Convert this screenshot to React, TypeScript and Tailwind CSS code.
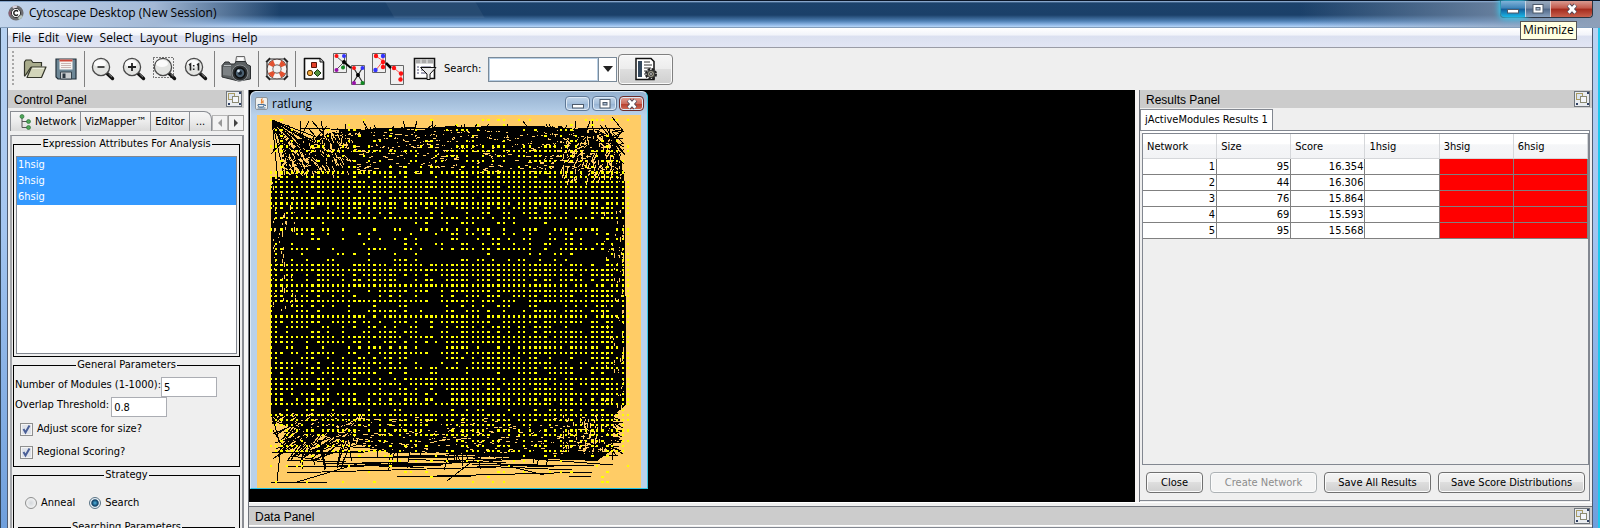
import React, { useState } from "react";

/* ---------- network drawing ---------- */

const NET_W = 384;
const NET_H = 373;
const PITCH = 5.17;
const ROW_DENSITY = [
  0.22, 0.12, 0.12, 0.12, 0.2, 0.4, 0.85, 0.3, 0.55, 0.3, 0.85, 0.7, 0.97, 0.97, 0.85, 0.97, 0.97, 0.85, 0.5, 0.92,
  0.14, 0.5, 0.45, 0.4, 0.4, 0.5, 0.25, 0.4, 0.93, 0.98, 0.85, 0.7, 0.96, 0.9, 0.6, 0.95, 0.4, 0.55, 0.93, 0.8,
  0.5, 0.7, 0.95, 0.85, 0.5, 0.8, 0.5, 0.7, 0.9, 0.6, 0.8, 0.93, 0.6, 0.9, 0.75, 0.93, 0.45, 0.97, 0.85, 0.55,
  0.6, 0.6, 0.45, 0.5, 0.55, 0.25, 0.12, 0.2, 0.25, 0.08, 0.1,
];

function makeRandom(seed: number) {
  let s = seed;
  return () => {
    s = (s * 1664525 + 1013904223) % 4294967296;
    return s / 4294967296;
  };
}

function buildNetwork() {
  const r = makeRandom(77);
  const cx = (v: number) => Math.max(14, Math.min(368, Math.round(v)));
  const n = (v: number) => Math.round(v);
  const line = (x1: number, y1: number, x2: number, y2: number) => `M${cx(x1)} ${n(y1)}L${cx(x2)} ${n(y2)}`;
  let black = "";
  let gaps = "";
  let dots = "";

  // edges fanning out along the top
  for (let i = 0; i < 110; i++) {
    const x = 16 + r() * 345;
    black += line(x, 9 + r() * 12, x + (r() - 0.5) * 50, 28 + r() * 12);
  }
  for (let i = 0; i < 22; i++) {
    const x = 20 + r() * 240;
    black += line(x, 11 + r() * 9, x + 50 + r() * 80, 11 + r() * 9);
  }
  for (let i = 0; i < 18; i++) black += line(15, 5, 22 + r() * 70, 26 + r() * 50);
  for (let i = 0; i < 9; i++) black += line(15, 62 + r() * 4, 24 + r() * 20, 60 + r() * 20);
  for (let i = 0; i < 12; i++) {
    const x = 30 + r() * 320;
    black += line(x, 6, x + (r() - 0.5) * 24, 20);
  }

  // edges along both sides
  for (let i = 0; i < 80; i++) {
    const y = 75 + r() * 240;
    black += line(14 + r() * 3, y, 22 + r() * 3, y + (r() - 0.5) * 40);
  }
  for (let i = 0; i < 90; i++) {
    const y = 14 + r() * 270;
    black += line(368 - r() * 4, y, 355, y + (r() - 0.5) * 30);
  }

  // edges hanging under the mass
  for (let i = 0; i < 60; i++) {
    const x = 14 + r() * 50;
    const y = 318 + r() * 30;
    black += line(x, y, x + 18 + r() * 35, y - 12 - r() * 26);
  }
  for (let i = 0; i < 45; i++) {
    const x = 14 + r() * 250;
    const y = 330 + r() * 22;
    black += line(x, y, x + 30 + r() * 90, y + (r() - 0.5) * 9);
  }
  for (let i = 0; i < 34; i++) {
    const x = 34 + r() * 290;
    black += line(x, 325, x + (r() - 0.5) * 26, 342 + r() * 14);
  }
  for (let i = 0; i < 26; i++) {
    const y = 296 + r() * 36;
    black += line(340 + r() * 12, y, 366 - r() * 8, y + (r() - 0.3) * 18);
  }
  black += line(14, 367, 70, 367) + line(40, 367, 100, 349) + line(140, 361, 214, 361) + line(180, 361, 336, 357);
  black += line(216, 342, 287, 360) + line(30, 358, 240, 352) + line(312, 361, 334, 361) + line(355, 300, 356, 345);
  black += line(20, 366, 24, 330) + line(252, 342, 356, 350) + line(240, 336, 340, 346) + line(190, 366, 226, 338);

  // places where the background shows through
  const gap = (x: number, y: number, dx: number, dy: number) => {
    gaps += line(x, y, x + dx, y + dy);
  };
  for (let i = 0; i < 600; i++) {
    const y = 16 + Math.pow(r(), 1.9) * 42;
    gap(22 + r() * 340, y, 1 + r() * 4, (r() - 0.5) * 4);
  }
  for (let i = 0; i < 190; i++) gap(22 + Math.pow(r(), 1.6) * 70, 16 + r() * 42, 1 + r() * 3, 2 + r() * 6);
  for (let i = 0; i < 150; i++) gap(366 - Math.pow(r(), 1.5) * 60, 16 + r() * 48, -1 - r() * 2, 2 + r() * 5);
  for (let i = 0; i < 70; i++) gap(16 + Math.pow(r(), 2) * 22, 70 + r() * 130, 0, 1 + r() * 4);
  for (let i = 0; i < 90; i++) gap(366 - Math.pow(r(), 2) * 20, 90 + r() * 200, 0, 1 + r() * 4);
  for (let i = 0; i < 190; i++) gap(16 + Math.pow(r(), 1.5) * 90, 300 + r() * 34, 2 + r() * 4, -1 - r() * 4);
  for (let i = 0; i < 360; i++) gap(60 + r() * 292, 338 - Math.pow(r(), 1.4) * 36, 1 + r() * 3, (r() - 0.5) * 2);
  for (let i = 0; i < 90; i++) gap(355 - r() * 50, 300 + r() * 36, 1, 1 + r() * 4);

  // nodes
  const columns = Array.from({ length: 70 }, () => 0.6 + r() * 0.7);
  ROW_DENSITY.forEach((density, row) => {
    const h = [5, 10, 16, 21, 32, 38, 44, 54, 60].includes(row) ? 3 : 2;
    columns.forEach((weight, col) => {
      if (r() < density * (density > 0.9 ? 1 : weight)) {
        const w = col % 7 === 2 || col % 11 === 9 || col % 9 === 8 ? 3 : 2;
        dots += `M${n(13 + col * PITCH)} ${n(4 + row * PITCH)}h${w}v${h}h-${w}z`;
      }
    });
  });
  return { black, gaps, dots };
}

const NETWORK = buildNetwork();

function NetworkView() {
  return (
    <svg
      viewBox={`0 0 ${NET_W} ${NET_H}`}
      className="block size-full bg-[#ffcc66]"
      shapeRendering="crispEdges"
      role="img"
      aria-label="ratlung network"
    >
      <path
        d="M26 26L60 22 84 15 130 17 190 13 240 12 290 12 340 15 354 22 364 40 368 70 369 290 357 300 354 336 340 346 290 344 240 342 180 338 130 338 90 326 50 316 16 308 14 300 14 70 24 64z"
        fill="#000"
      />
      <path d={NETWORK.gaps} stroke="#ffcc66" fill="none" />
      <path d={NETWORK.black} stroke="#000" fill="none" />
      <circle cx="110" cy="25" r="8" fill="#000" />
      <path d={NETWORK.dots} fill="#ffff00" />
    </svg>
  );
}

/* ---------- icons ---------- */

function AppIcon() {
  return (
    <svg viewBox="0 0 16 16" className="size-4">
      <circle cx="8" cy="8" r="7.6" fill="#6d6d70" />
      <path d="M8 8L4 1.5A7.6 7.6 0 0 1 9 .5z" fill="#d7cfd9" />
      <path d="M8 8l7 3a7.6 7.6 0 0 1-4 4z" fill="#b9c7bd" />
      <path d="M8 8L1 11a7.6 7.6 0 0 1 0-5z" fill="#8d5f74" />
      <circle cx="8" cy="8" r="4.6" fill="#fff" stroke="#333" />
      <path d="M10 6.4a2.4 2.4 0 1 0 0 3.2" fill="none" stroke="#222" strokeWidth="1.5" />
    </svg>
  );
}

function FolderIcon() {
  return (
    <svg viewBox="0 0 24 22" className="h-[22px] w-6">
      <path d="M1.5 18V4l1.5-2h5l2 2.5h8.500v4" fill="#a9ac8c" stroke="#34362b" strokeWidth="1.2" />
      <path d="M4 19.500h14.500L23 9H8.500z" fill="#d3d5ba" stroke="#34362b" strokeWidth="1.2" strokeLinejoin="round" />
      <path d="M1.500 18.500L8 9" stroke="#34362b" strokeWidth="1.2" />
      <path d="M9.500 10.300h11.500" stroke="#f2f3e4" />
    </svg>
  );
}

function FloppyIcon() {
  return (
    <svg viewBox="0 0 22 22" className="size-[22px]">
      <path d="M1 1h20v20H3l-2-2z" fill="#6d8796" stroke="#23303a" strokeWidth="1.2" />
      <path d="M4.500 1.500h13v10h-13z" fill="#f7f4f2" />
      <path d="M4.500 1.500h13v2h-13z" fill="#cf4a3c" />
      <path d="M6 5.500h10M6 7.500h10M6 9.500h10" stroke="#c9b5b3" />
      <path d="M5.500 14h11v7h-11z" fill="#c9cdcf" stroke="#37444e" />
      <path d="M7.500 15.500h3v4.500h-3z" fill="#2b3640" />
    </svg>
  );
}

function Lens({ children, box = false }: { children: React.ReactNode; box?: boolean }) {
  return (
    <svg viewBox="0 0 24 24" className="size-6">
      <path d="M15.500 16l6 5.500" stroke="#111" strokeWidth="3.400" strokeLinecap="round" />
      <path d="M17.500 17l3.500 3.200" stroke="#8b8b8b" strokeWidth="1" />
      <circle cx="10" cy="10" r="8.600" fill="#e3e4e2" stroke="#4a4a4a" strokeWidth="1.300" />
      <ellipse cx="9" cy="6.500" rx="6" ry="3.600" fill="#fbfbfb" />
      {box && <path d="M.5.5h20v20H.5z" fill="none" stroke="#000" strokeDasharray="1 2" />}
      {children}
    </svg>
  );
}

function CameraIcon() {
  return (
    <svg viewBox="0 0 32 28" className="h-7 w-8">
      <path d="M16.500 1.500h8l1 6h-10z" fill="#e8e8e8" stroke="#666" />
      <path d="M18 3h5v2.500h-5z" fill="#fff" />
      <path d="M5 7h4l1.500 2h4L16 6.500h9.500L27 9.500l3.500 1.500v13l-12 2L2 22V10.500z" fill="#5c6163" stroke="#2c2f31" />
      <path d="M3 12h8v9l-8-1z" fill="#7d8285" />
      <path d="M4 10.500h7" stroke="#b9bdc0" />
      <circle cx="20" cy="18" r="8" fill="#2d3133" stroke="#8a8e91" />
      <circle cx="20" cy="18" r="5" fill="#4a5f70" stroke="#0d0e0f" strokeWidth="1.500" />
      <circle cx="20" cy="18" r="2" fill="#15212c" />
      <circle cx="18.500" cy="16" r="1.400" fill="#d6e4ee" />
    </svg>
  );
}

function LifebuoyIcon() {
  return (
    <svg viewBox="0 0 24 24" className="size-6">
      <path d="M2 5l3-3h14l3 3v14l-3 3H5l-3-3z" fill="none" stroke="#333" strokeWidth="1.200" />
      <circle cx="12" cy="12" r="7" fill="none" stroke="#3a2a27" strokeWidth="6.400" />
      <circle cx="12" cy="12" r="7" fill="none" stroke="#f8f4f2" strokeWidth="5" />
      <circle
        cx="12"
        cy="12"
        r="7"
        fill="none"
        stroke="#e2502f"
        strokeWidth="5"
        strokeDasharray="4.800 6.196"
        strokeDashoffset="2.400"
        transform="rotate(45 12 12)"
      />
      <path d="M1 5l4-4M19 1l4 4M23 19l-4 4M5 23l-4-4" stroke="#222" strokeWidth="1.500" />
    </svg>
  );
}

function ShapesPageIcon() {
  return (
    <svg viewBox="0 0 22 24" className="h-6 w-[22px]">
      <path d="M1.500 1.500H17l3.500 3.500v17h-19z" fill="#fdfdfd" stroke="#111" strokeWidth="1.600" strokeLinejoin="round" />
      <path d="M17 1.500V5h3.500" fill="#ccc" stroke="#111" />
      <path d="M8.500 5.500h5v5h-5z" fill="#e2402a" stroke="#5a1208" />
      <circle cx="7" cy="16" r="2.700" fill="#f2a73b" stroke="#573205" />
      <path d="M14.500 12.500l3.500 3.500-3.500 3.500L11 16z" fill="#4f8f3c" stroke="#17330f" />
    </svg>
  );
}

function CopyNetworkIcon() {
  return (
    <svg viewBox="0 0 32 32" className="size-8">
      <path d="M.5.5h13v19H.5zM18.500 12.500h13v19h-13z" fill="#efefef" stroke="#666" />
      <path d="M3 3l8 7 1-8M11 9L3 17M11 9v6" fill="none" stroke="#555" />
      <path d="M12 10l6 5" stroke="#000" strokeWidth="2" />
      <path d="M20 14l10 16M30 14L20 30" stroke="#333" strokeWidth="1.200" />
      <circle cx="3.500" cy="3" r="2" fill="#f11" />
      <circle cx="11" cy="3" r="2" fill="#33f" />
      <circle cx="11" cy="9" r="2" fill="#000" />
      <circle cx="3.500" cy="17" r="2" fill="#91a" />
      <circle cx="10" cy="14.500" r="2" fill="#182" />
      <circle cx="21" cy="15" r="2" fill="#f11" />
      <circle cx="29.500" cy="15" r="2" fill="#33f" />
      <circle cx="25" cy="22" r="2" fill="#000" />
      <circle cx="21" cy="30" r="2" fill="#91a" />
      <circle cx="29.500" cy="30" r="2" fill="#182" />
    </svg>
  );
}

function SubNetworkIcon() {
  return (
    <svg viewBox="0 0 32 32" className="size-8">
      <path d="M.5.5h13v19H.5zM18.500 12.500h13v19h-13z" fill="#efefef" stroke="#666" />
      <path d="M4 3l7 5-7 9M11 8V3M11 8v6" fill="none" stroke="#f55" />
      <path d="M14 10l5 5" stroke="#000" strokeWidth="2.500" />
      <path d="M22 15l7 6v6" fill="none" stroke="#f55" />
      <circle cx="4" cy="3" r="2.200" fill="#f11" />
      <circle cx="11" cy="3" r="2.200" fill="#33f" />
      <circle cx="11" cy="9" r="2.200" fill="#f11" />
      <circle cx="11" cy="14" r="2.200" fill="#f11" />
      <circle cx="3.500" cy="17" r="2.200" fill="#33f" />
      <circle cx="22" cy="15" r="2.200" fill="#f11" />
      <circle cx="29" cy="20.500" r="2.200" fill="#f11" />
      <circle cx="28.500" cy="26.500" r="2.200" fill="#f11" />
    </svg>
  );
}

function FilterIcon() {
  return (
    <svg viewBox="0 0 24 24" className="size-6">
      <path d="M1.500 1.500h20v20h-20z" fill="#fff" stroke="#111" strokeWidth="1.600" />
      <path d="M2.500 2.500h18v4h-18z" fill="#a9a9a9" />
      <path d="M8 2.500v4M14 2.500v4" stroke="#eee" />
      <path d="M4 10h2M4 13h2M4 16h2M8 10h10M8 13h3M8 16h5" stroke="#4a4a70" />
      <path d="M7.500 10.500h15.500l-6 6.500v5.500h-3V17z" fill="#e9e9e9" stroke="#111" strokeLinejoin="round" />
    </svg>
  );
}

function SearchOptionsIcon() {
  return (
    <svg viewBox="0 0 24 24" className="size-6">
      <path d="M2 1.500h15l3 3v18H2z" fill="#fff" stroke="#111" strokeWidth="1.500" />
      <path d="M4 4h4v16H4z" fill="#33475c" />
      <path d="M10 5h6M10 8h8M10 11h7M10 14h4M10 17h3" stroke="#333" />
      <circle cx="17" cy="17" r="4" fill="none" stroke="#222" strokeWidth="4" strokeDasharray="2 1.140" />
      <circle cx="17" cy="17" r="3.600" fill="#9a9888" stroke="#333" />
      <circle cx="17" cy="17" r="1.400" fill="#eee" stroke="#333" />
    </svg>
  );
}

function TreeIcon() {
  return (
    <svg viewBox="0 0 12 16" className="h-4 w-3">
      <path d="M3 3v10.500h6M3 7.500h6" fill="none" stroke="#555" />
      <circle cx="3" cy="2.500" r="2" fill="#4fa65a" stroke="#236b31" strokeWidth=".6" />
      <circle cx="9.500" cy="7.500" r="2" fill="#4fa65a" stroke="#236b31" strokeWidth=".6" />
      <circle cx="9.500" cy="13.500" r="2" fill="#4fa65a" stroke="#236b31" strokeWidth=".6" />
    </svg>
  );
}

function JavaIcon() {
  return (
    <svg viewBox="0 0 13 13" className="size-[13px]">
      <rect x=".5" y=".5" width="12" height="12" rx="1.500" fill="#f1f1ee" stroke="#8d959c" />
      <path d="M7.500 1.500c-3 2 1 2.500-1.500 5M8.500 3.500c-1.500 1 .3 1.500-.8 2.800" fill="none" stroke="#e8802e" strokeWidth="1.200" />
      <path d="M3 7.500h6v1.500c-1 1.500-5 1.500-6 0zM2.500 11h8M9 8h1.500v1" fill="none" stroke="#47709a" />
    </svg>
  );
}

function FloatButton({ label }: { label: string }) {
  return (
    <button aria-label={label} className="size-4 shrink-0">
      <svg viewBox="0 0 16 16" className="size-4" shapeRendering="crispEdges">
        <rect x=".5" y=".5" width="15" height="15" rx="1" fill="#e9ecef" stroke="#70767c" />
        <path d="M2.500 2.500h6v6h-6z" fill="#dce4f0" stroke="#a89a62" />
        <path d="M6.500 5.500h6v6h-6z" fill="#f4f6fa" stroke="#8b8a72" />
        <path d="M13 1h2v2h-2zM2 12h2v2H2zM13 12h2v2h-2z" fill="#2e3f63" />
      </svg>
    </button>
  );
}

function CaptionGlyph({ kind }: { kind: "min" | "max" | "close" }) {
  return (
    <svg viewBox="0 0 14 12" className="h-3 w-3.5">
      {kind === "min" && <rect x="1.500" y="6.500" width="11" height="3.500" fill="#fff" stroke="#4d5a6b" />}
      {kind === "max" && (
        <>
          <rect x="2" y="1.500" width="10" height="8.500" fill="#fff" stroke="#4d5a6b" />
          <rect x="5" y="4.500" width="4" height="2.500" fill="#a9bbd3" stroke="#4d5a6b" />
        </>
      )}
      {kind === "close" && (
        <>
          <path d="M3.500 2l7 8M10.500 2l-7 8" stroke="#4d4555" strokeWidth="4.600" />
          <path d="M3.600 2.200l6.800 7.600M10.400 2.200l-6.800 7.600" stroke="#fff" strokeWidth="2.800" />
        </>
      )}
    </svg>
  );
}

/* ---------- shared parts ---------- */

function ToolButton({ label, className = "w-[31px]", children }: { label: string; className?: string; children: React.ReactNode }) {
  return (
    <button aria-label={label} className={`flex h-8 shrink-0 items-center justify-center ${className}`}>
      {children}
    </button>
  );
}

function Separator() {
  return (
    <span className="flex h-9 w-1.5 shrink-0 justify-center">
      <span className="w-px bg-[#808080]" />
    </span>
  );
}

function PanelHeader({ title }: { title: string }) {
  return (
    <div className="flex h-[18px] shrink-0 items-center justify-between bg-[#cccccc] pr-0.5 pl-1.5">
      <h2 className="pt-0.5 font-['Liberation_Sans',sans-serif] text-xs leading-4 text-black">{title}</h2>
      <FloatButton label={`Float ${title}`} />
    </div>
  );
}

function CheckRow({ id, label }: { id: string; label: string }) {
  return (
    <div className="flex items-center gap-1 pl-1">
      <span className="relative size-[13px]">
        <input id={id} type="checkbox" defaultChecked className="peer block size-[13px] appearance-none border border-[#8e8f8f] bg-[#dfe3ea] shadow-[inset_0_0_0_1px_#f4f4f4]" />
        <svg viewBox="0 0 13 13" className="pointer-events-none absolute inset-0 hidden size-[13px] peer-checked:block">
          <path d="M3.500 6l2 3.500 4-7" fill="none" stroke="#4a5f97" strokeWidth="2" />
        </svg>
      </span>
      <label htmlFor={id}>{label}</label>
    </div>
  );
}

function RadioRow({ id, label, checked, onSelect }: { id: string; label: string; checked: boolean; onSelect: () => void }) {
  return (
    <div className="flex items-center gap-1">
      <input
        id={id}
        type="radio"
        name="strategy"
        checked={checked}
        onChange={onSelect}
        className="size-3 appearance-none rounded-full border border-[#8e8f8f] bg-[radial-gradient(circle,#d4d8dc_0,#f6f6f6_80%)] checked:border-[#5a7486] checked:bg-[radial-gradient(circle,#4fb4e0_0,#0d3d63_45%,#e8f0f5_60%)]"
      />
      <label htmlFor={id}>{label}</label>
    </div>
  );
}

const TAHOMA = "font-['DejaVu_Sans_Condensed','DejaVu_Sans',sans-serif] text-[11px] leading-4 text-black";
const SEGOE = "font-['Open_Sans','Noto_Sans',sans-serif] text-xs leading-4 text-black";

/* ---------- window parts ---------- */

function TitleBar() {
  return (
    <header className="relative flex h-7 shrink-0 items-start justify-between border-t border-[#0a1526] bg-[linear-gradient(to_bottom,#a9c6ea_0,#1c426b_2px,#1b4069_14px,#4f80b4_20px,#93bbea_24px,#b9d6f5_26px,#4d6480_27px)]">
      <div className="absolute inset-y-px left-0 w-[280px] bg-[linear-gradient(to_right,#c3d5ec_0,#a3b9d6_55%,transparent_100%)]" />
      <div className="absolute top-px left-[390px] h-4 w-[90px] -skew-x-[-30deg] bg-white/5" />
      <div className="absolute inset-y-px right-0 w-[300px] bg-[linear-gradient(to_right,transparent,#8d9fb8)]" />
      <div className="relative flex items-center gap-[5px] pt-1 pl-2">
        <AppIcon />
        <h1 className={SEGOE}>Cytoscape Desktop (New Session)</h1>
      </div>
      <div className="relative mr-[7px] flex h-[17px] rounded-b border border-t-0 border-[#2c3440]">
        <button aria-label="Minimize" className="flex w-6 items-center justify-center rounded-bl bg-[linear-gradient(#7fb3d8_0,#3d83b8_45%,#145c98_50%,#19b7e8_100%)] shadow-[0_0_6px_2px_#35d0f5]">
          <CaptionGlyph kind="min" />
        </button>
        <button aria-label="Maximize" className="flex w-[25px] items-center justify-center border-l border-[#c8d4e2] bg-[linear-gradient(#9aabbf_0,#7388a3_45%,#4f6787_50%,#8aa2bf_100%)]">
          <CaptionGlyph kind="max" />
        </button>
        <button aria-label="Close window" className="flex w-[42px] items-center justify-center rounded-br border-l border-[#e2c4c0] bg-[linear-gradient(#d99a90_0,#c2584a_45%,#a42a1c_50%,#c8604c_100%)]">
          <CaptionGlyph kind="close" />
        </button>
        <div role="tooltip" className={`absolute top-5 left-[19px] z-10 h-[19px] border border-[#555] bg-[#ffffe1] px-0.5 ${SEGOE}`}>
          Minimize
        </div>
      </div>
    </header>
  );
}

function MenuBar() {
  return (
    <nav className={`flex h-5 shrink-0 items-center gap-[7px] border-b border-[#9a9ca6] bg-[linear-gradient(#ffffff_0,#f2f4fa_35%,#dbe0f0_45%,#e2e6f4_100%)] pl-1 ${SEGOE}`}>
      {["File", "Edit", "View", "Select", "Layout", "Plugins", "Help"].map((item) => (
        <button key={item}>{item}</button>
      ))}
    </nav>
  );
}

function ToolBar() {
  return (
    <div className={`flex h-[42px] shrink-0 items-center bg-[#efefef] ${TAHOMA}`}>
      <span className="mr-[5px] ml-1 h-9 w-0.5 shrink-0 bg-[repeating-linear-gradient(#a8a8a8_0_2px,transparent_2px_4px)]" />
      <ToolButton label="Open"><FolderIcon /></ToolButton>
      <ToolButton label="Save"><FloppyIcon /></ToolButton>
      <Separator />
      <ToolButton label="Zoom out"><Lens><path d="M6.500 10h7" stroke="#222" strokeWidth="1.600" /></Lens></ToolButton>
      <ToolButton label="Zoom in"><Lens><path d="M6 10h8M10 6v8" stroke="#222" strokeWidth="1.800" /></Lens></ToolButton>
      <ToolButton label="Zoom selected"><Lens box>{null}</Lens></ToolButton>
      <ToolButton label="Zoom to fit">
        <Lens><path d="M5 8l1.500-1v6.500M13 8l1.500-1v6.500M9.700 8v1.500M9.700 11.500v1.500" fill="none" stroke="#222" strokeWidth="1.600" /></Lens>
      </ToolButton>
      <Separator />
      <ToolButton label="Export image" className="w-[38px]"><CameraIcon /></ToolButton>
      <Separator />
      <ToolButton label="Help contents"><LifebuoyIcon /></ToolButton>
      <Separator />
      <ToolButton label="VizMapper" className="w-8"><ShapesPageIcon /></ToolButton>
      <ToolButton label="Clone network" className="w-[38px]"><CopyNetworkIcon /></ToolButton>
      <ToolButton label="New network from selection" className="w-10"><SubNetworkIcon /></ToolButton>
      <ToolButton label="Filters" className="w-[34px]"><FilterIcon /></ToolButton>
      <label htmlFor="search" className="w-[46px] shrink-0 pl-0.5">Search:</label>
      <div className="flex h-[25px] border border-[#7a8a99]">
        <input id="search" className="w-[109px] border border-[#b8cfe5] bg-white px-1 outline-none" />
        <button aria-label="Show recent searches" className="flex w-[18px] items-center justify-center border-l border-[#7a8a99] bg-white">
          <svg viewBox="0 0 10 6" className="h-1.5 w-2.5"><path d="M0 0h10L5 6z" fill="#222" /></svg>
        </button>
      </div>
      <button aria-label="Search options" className="ml-px flex h-[31px] w-[55px] items-center justify-center rounded-sm border border-[#808080] bg-[linear-gradient(#f6f6f6_0,#ececec_49%,#dedede_50%,#cfcfcf_100%)] shadow-[inset_0_0_0_1px_#fafafa]">
        <SearchOptionsIcon />
      </button>
    </div>
  );
}

function ControlPanel() {
  const [strategy, setStrategy] = useState("search");
  const tab = "flex h-5 items-center border border-b-0 border-[#8a8d93] bg-[linear-gradient(#f6f6f6_0,#ececec_50%,#dadada_100%)]";
  return (
    <aside className={`flex w-[236px] shrink-0 flex-col overflow-hidden bg-[#efefef] ${TAHOMA}`}>
      <PanelHeader title="Control Panel" />
      <div className="flex shrink-0 items-end pt-[3px] pl-0.5">
        <div role="tablist" className="flex grow">
          <button role="tab" className={`${tab} w-[71px] gap-1 pl-2`}><TreeIcon /><span>Network</span></button>
          <button role="tab" className={`${tab} w-[70px] justify-center border-l-0`}>VizMapper™</button>
          <button role="tab" className={`${tab} w-[39px] justify-center border-l-0`}>Editor</button>
          <button role="tab" className={`${tab} w-[22px] justify-center rounded-tr-lg border-l-0`}>...</button>
        </div>
        <button aria-label="Scroll tabs left" className="flex h-4 w-4 items-center justify-center border border-[#b5b5b5] bg-[#f3f3f3]">
          <svg viewBox="0 0 4 8" className="h-2 w-1"><path d="M4 0v8L0 4z" fill="#999" /></svg>
        </button>
        <button aria-label="Scroll tabs right" className="flex h-4 w-4 items-center justify-center border border-[#999] bg-[#f3f3f3]">
          <svg viewBox="0 0 4 8" className="h-2 w-1"><path d="M0 0v8l4-4z" fill="#444" /></svg>
        </button>
      </div>
      <div className="mt-1 ml-0.5 flex grow flex-col border-x-2 border-t border-[#8a8d93] border-l-[#a5a7ab] pr-0.5 pl-px">
        <fieldset className="shrink-0 border border-black px-0.5 pb-0.5">
          <legend className="mx-auto px-px">Expression Attributes For Analysis</legend>
          <ul role="listbox" aria-label="Expression Attributes" aria-multiselectable="true" className="mt-1 h-[198px] border border-[#828790] bg-white">
            {["1hsig", "3hsig", "6hsig"].map((name) => (
              <li key={name} role="option" aria-selected="true" className="bg-[#3399ff] pl-px text-white">{name}</li>
            ))}
          </ul>
        </fieldset>
        <fieldset className="shrink-0 border border-black px-px pb-1.5">
          <legend className="mx-auto px-px">General Parameters</legend>
          <div className="mt-1 flex">
            <label htmlFor="modules">Number of Modules (1-1000):</label>
            <input id="modules" defaultValue="5" className="h-5 w-14 border border-[#abadb3] bg-white px-0.5 outline-none" />
          </div>
          <div className="flex gap-0.5">
            <label htmlFor="overlap">Overlap Threshold:</label>
            <input id="overlap" defaultValue="0.8" className="h-5 w-14 border border-[#abadb3] bg-white px-0.5 outline-none" />
          </div>
          <div className="mt-1 flex flex-col gap-[7px] pl-px">
            <CheckRow id="adjust" label="Adjust score for size?" />
            <CheckRow id="regional" label="Regional Scoring?" />
          </div>
        </fieldset>
        <fieldset className="shrink-0 border border-black px-1 pb-1">
          <legend className="mx-auto px-px">Strategy</legend>
          <div className="mt-3 flex gap-3.5 pl-[7px]">
            <RadioRow id="anneal" label="Anneal" checked={strategy === "anneal"} onSelect={() => setStrategy("anneal")} />
            <RadioRow id="greedy" label="Search" checked={strategy === "search"} onSelect={() => setStrategy("search")} />
          </div>
          <fieldset className="mt-2 border border-black pb-8">
            <legend className="mx-auto px-px">Searching Parameters</legend>
          </fieldset>
        </fieldset>
      </div>
    </aside>
  );
}

function NetworkWindow() {
  const button = "flex h-[15px] w-[25px] items-center justify-center rounded-sm border border-[#5f7896] shadow-[inset_0_0_0_1px_#dfeaf6]";
  return (
    <section className="absolute top-px left-px flex h-[398px] w-[398px] flex-col rounded-t-md border border-t-[#dce9f5] border-r-[#36c5dd] border-b-[#24c3e8] border-l-[#dfe9f3] bg-[#b9d1ea]">
      <div className="flex h-[23px] shrink-0 items-center justify-between rounded-t-md bg-[linear-gradient(#95b1d0,#b9d1ea)] pr-[3px] pl-1">
        <div className="flex items-center gap-1">
          <JavaIcon />
          <h2 className={SEGOE}>ratlung</h2>
        </div>
        <div className="flex gap-0.5">
          <button aria-label="Minimize ratlung" className={`${button} bg-[linear-gradient(#c2d5e9_0,#a5bfdb_50%,#93b0d1_51%,#b9d0e8_100%)]`}><CaptionGlyph kind="min" /></button>
          <button aria-label="Maximize ratlung" className={`${button} bg-[linear-gradient(#c2d5e9_0,#a5bfdb_50%,#93b0d1_51%,#b9d0e8_100%)]`}><CaptionGlyph kind="max" /></button>
          <button aria-label="Close ratlung" className={`${button} border-[#6d2c2c] bg-[linear-gradient(#e0a399_0,#cd6d5e_50%,#b53c2b_51%,#d0705c_100%)]`}><CaptionGlyph kind="close" /></button>
        </div>
      </div>
      <div className="min-h-0 grow px-1.5">
        <NetworkView />
      </div>
    </section>
  );
}

const RESULTS = [
  ["1", "95", "16.354"],
  ["2", "44", "16.306"],
  ["3", "76", "15.864"],
  ["4", "69", "15.593"],
  ["5", "95", "15.568"],
];

function ResultsPanel() {
  const cell = "h-4 border-r border-b border-[#808080] p-0";
  const button = "h-[21px] rounded-sm border border-[#707070] bg-[linear-gradient(#f4f4f4_0,#ececec_49%,#dedede_50%,#cfcfcf_100%)] shadow-[inset_0_0_0_1px_#fbfbfb] disabled:border-[#adb2b5] disabled:bg-none disabled:bg-[#f4f4f4] disabled:text-[#8c8c8c]";
  return (
    <section className={`flex w-[453px] shrink-0 flex-col border-l border-[#70747c] bg-[#efefef] pb-px ${TAHOMA}`}>
      <PanelHeader title="Results Panel" />
      <div role="tablist" className="flex shrink-0 pt-px">
        <button role="tab" aria-selected="true" className="-mb-px h-[22px] w-[133px] border border-b-0 border-[#828790] bg-white pb-0.5">jActiveModules Results 1</button>
      </div>
      <div className="mr-0.5 flex min-h-0 grow flex-col border border-l-0 border-[#828790] bg-[#efefef] pl-0.5">
        <div className="h-0.5 shrink-0 bg-white" />
        <div className="grow border border-[#828790]">
          <table className="w-full table-fixed border-separate border-spacing-0">
            <thead>
              <tr>
                {["Network", "Size", "Score", "1hsig", "3hsig", "6hsig"].map((h) => (
                  <th key={h} className="h-[25px] border-r border-b border-[#d5d7da] bg-[linear-gradient(#ffffff_0,#ffffff_40%,#f5f6f8_45%,#f2f3f5_100%)] pt-px pl-1 text-left font-normal">{h}</th>
                ))}
              </tr>
            </thead>
            <tbody>
              {RESULTS.map((row) => (
                <tr key={row[0]}>
                  {row.map((value, i) => (
                    <td key={i} className={`${cell} bg-white pr-px text-right leading-[15px]`}>{value}</td>
                  ))}
                  <td className={`${cell} bg-white`} />
                  <td className={`${cell} bg-[#ff0000]`} />
                  <td className={`${cell} bg-[#ff0000]`} />
                </tr>
              ))}
            </tbody>
          </table>
        </div>
        <div className="flex shrink-0 gap-[7px] px-1 py-[7px]">
          <button className={`${button} w-[57px]`}>Close</button>
          <button disabled className={`${button} w-[107px]`}>Create Network</button>
          <button className={`${button} w-[107px]`}>Save All Results</button>
          <button className={`${button} w-[147px]`}>Save Score Distributions</button>
        </div>
      </div>
    </section>
  );
}

export default function App() {
  return (
    <div className="flex h-screen flex-col overflow-hidden bg-[#a9c8ee]">
      <TitleBar />
      <div className="flex min-h-0 grow bg-[linear-gradient(#b7d2f2_0,#a3c5f0_40%,#6f9fdc_100%)]">
        <div className="w-[7px] shrink-0 border-l border-[#33475c]" />
        <main className="flex min-w-0 grow flex-col border-x border-[#4d5a70] bg-[#efefef]">
          <MenuBar />
          <ToolBar />
          <div className="flex min-h-0 grow">
            <ControlPanel />
            <div className="w-[5px] shrink-0 border-r border-[#70747c] bg-[#f7f7f7]" />
            <div className="flex min-w-0 grow flex-col">
              <div className="flex min-h-0 grow">
                <div className="relative min-w-0 grow overflow-hidden bg-black">
                  <NetworkWindow />
                </div>
                <div className="w-1 shrink-0 bg-[#f5f2f2]" />
                <ResultsPanel />
              </div>
              <div className="h-1 shrink-0 border-t border-white bg-[#efefef]" />
              <div className="shrink-0 border-t border-[#70747c] bg-[#efefef]">
                <PanelHeader title="Data Panel" />
                <div className="h-[3px] border-t border-b border-t-white border-b-[#828790]" />
              </div>
            </div>
          </div>
        </main>
        <div className="w-[7px] shrink-0 border-r-2 border-[#1fc8ee]" />
      </div>
    </div>
  );
}
